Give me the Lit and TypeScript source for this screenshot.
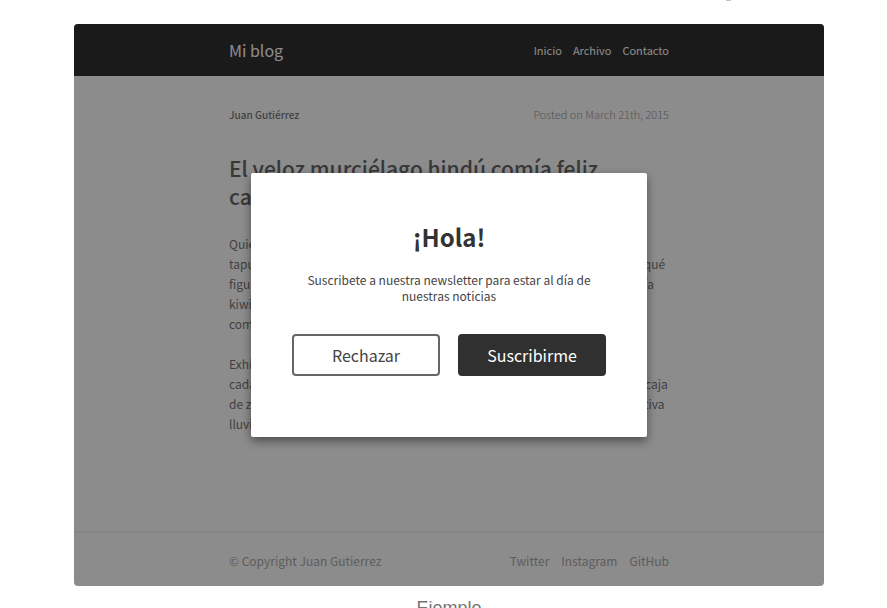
import { LitElement, html, css } from "lit";
import { customElement } from "lit/decorators.js";

/* Blog page shown behind the dialog. */
@customElement("blog-page")
export class BlogPage extends LitElement {
  static styles = css`
    :host {
      display: flex;
      flex-direction: column;
      background: #fff;
      color: #777;
      font-size: 12px;
      line-height: 20px;
    }
    .row {
      width: 440px;
      max-width: 90%;
      margin: 0 auto;
      display: flex;
      align-items: center;
      justify-content: space-between;
    }
    .top {
      background: #303030;
      padding: 16px 0;
    }
    .brand,
    .links a {
      color: #fff;
      text-decoration: none;
    }
    .brand {
      font-size: 16px;
    }
    .links {
      display: flex;
      gap: 12px;
      font-size: 11px;
    }
    .top .links {
      gap: 11px;
    }
    .article {
      width: 440px;
      max-width: 90%;
      margin: 0 auto;
      padding: 28px 0 97px;
    }
    .meta {
      display: flex;
      align-items: baseline;
      justify-content: space-between;
      font-size: 11px;
    }
    .author {
      font-size: 10px;
      font-weight: 500;
      color: #777;
    }
    .date {
      font-weight: 300;
      color: #999;
    }
    .title {
      margin: 29px 0 24px;
      font-size: 21px;
      line-height: 28px;
      font-weight: 500;
      color: #666;
    }
    .text {
      margin: 0 0 20px;
      white-space: nowrap;
    }
    .text:last-child {
      margin: 0;
    }
    .bottom {
      border-top: 2px solid #f2f2f2;
      padding: 18px 0 15px;
      color: #aaa;
    }
    .bottom .links {
      font-size: 12px;
    }
    .bottom .links a {
      color: #aaa;
    }
  `;

  render() {
    return html`
      <header class="top">
        <div class="row">
          <a class="brand" href="#">Mi blog</a>
          <nav class="links">
            <a href="#">Inicio</a><a href="#">Archivo</a><a href="#">Contacto</a>
          </nav>
        </div>
      </header>
      <article class="article">
        <div class="meta">
          <span class="author">Juan Gutiérrez</span>
          <span class="date">Posted on March 21th, 2015</span>
        </div>
        <h1 class="title">El veloz murciélago hindú comía feliz<br />cardillo y kiwi</h1>
        <p class="text">
          Quiere la boca exhausta vid, kiwi, piña y fugaz jamón. Fabio me exige, sin<br />
          tapujos que añada cerveza al whisky. Jovencillo emponzoñado de whisky ¡qué<br />
          figurota exhibe! La cigüeña tocaba cada vez mejor el saxofón y el búho pedía<br />
          kiwi y queso. El jefe buscó el éxtasis en un imprevisto baño y gozó<br />
          como un duque.
        </p>
        <p class="text">
          Exhíbanse politiquillos zafios, con orejas kilométricas y uñas de gavilán. El<br />
          cadáver de Wamba rey godo de España fue exhumado y trasladado en una caja<br />
          de zinc que pesó 1 kilo, el pingüino Wenceslao hizo kilómetros bajo exhaustiva<br />
          lluvia y nieve.
        </p>
      </article>
      <footer class="bottom">
        <div class="row">
          <span>© Copyright Juan Gutierrez</span>
          <nav class="links">
            <a href="#">Twitter</a><a href="#">Instagram</a><a href="#">GitHub</a>
          </nav>
        </div>
      </footer>
    `;
  }
}

/* Newsletter dialog. */
@customElement("newsletter-dialog")
export class NewsletterDialog extends LitElement {
  static styles = css`
    :host {
      display: block;
      width: 396px;
      max-width: 90%;
      box-sizing: border-box;
      padding: 44px 41px 61px;
      border-radius: 2px;
      background: #fff;
      box-shadow: 0 4px 10px rgba(0, 0, 0, 0.45);
      color: #333;
      text-align: center;
    }
    .title {
      margin: 0;
      font-size: 24px;
      line-height: 40px;
      font-weight: 700;
    }
    .text {
      margin: 15px 8px 30px;
      font-size: 12px;
      line-height: 16px;
      color: #444;
    }
    .actions {
      display: flex;
      gap: 18px;
    }
    .button {
      flex: 1;
      height: 42px;
      padding: 0;
      border: 2px solid #666;
      border-radius: 4px;
      background: #fff;
      color: #444;
      font: inherit;
      font-size: 16px;
    }
    .primary {
      border-color: #303030;
      background: #303030;
      color: #fff;
    }
  `;

  render() {
    return html`
      <section role="dialog" aria-labelledby="title">
        <h2 class="title" id="title">¡Hola!</h2>
        <p class="text">
          Suscribete a nuestra newsletter para estar al día de nuestras noticias
        </p>
        <div class="actions">
          <button class="button" type="button">Rechazar</button>
          <button class="button primary" type="button">Suscribirme</button>
        </div>
      </section>
    `;
  }
}

@customElement("app-root")
export class AppRoot extends LitElement {
  static styles = css`
    :host {
      display: block;
      height: 100vh;
      overflow: hidden;
      background: #fff;
      font-family: "Noto Sans CJK SC", "Noto Sans", sans-serif;
    }
    /* Foot of the content scrolled off above the figure. */
    .previous {
      display: flex;
      justify-content: flex-end;
      height: 24px;
      padding-right: 156px;
    }
    .mark {
      width: 5px;
      height: 1px;
      background: #c4c4c4;
    }
    .figure {
      margin: 0 63px 0 74px;
    }
    .frame {
      position: relative;
      overflow: hidden;
      border-radius: 4px;
    }
    .overlay {
      position: absolute;
      inset: 0;
      display: flex;
      align-items: center;
      justify-content: center;
      background: rgba(0, 0, 0, 0.45);
    }
    .caption {
      margin-top: 10px;
      font-family: "Liberation Sans", Arial, sans-serif;
      font-size: 18px;
      line-height: 24px;
      color: #757575;
      text-align: center;
    }
  `;

  render() {
    return html`
      <div class="previous"><span class="mark"></span></div>
      <figure class="figure">
        <div class="frame">
          <blog-page></blog-page>
          <div class="overlay"><newsletter-dialog></newsletter-dialog></div>
        </div>
        <figcaption class="caption">Ejemplo</figcaption>
      </figure>
    `;
  }
}
